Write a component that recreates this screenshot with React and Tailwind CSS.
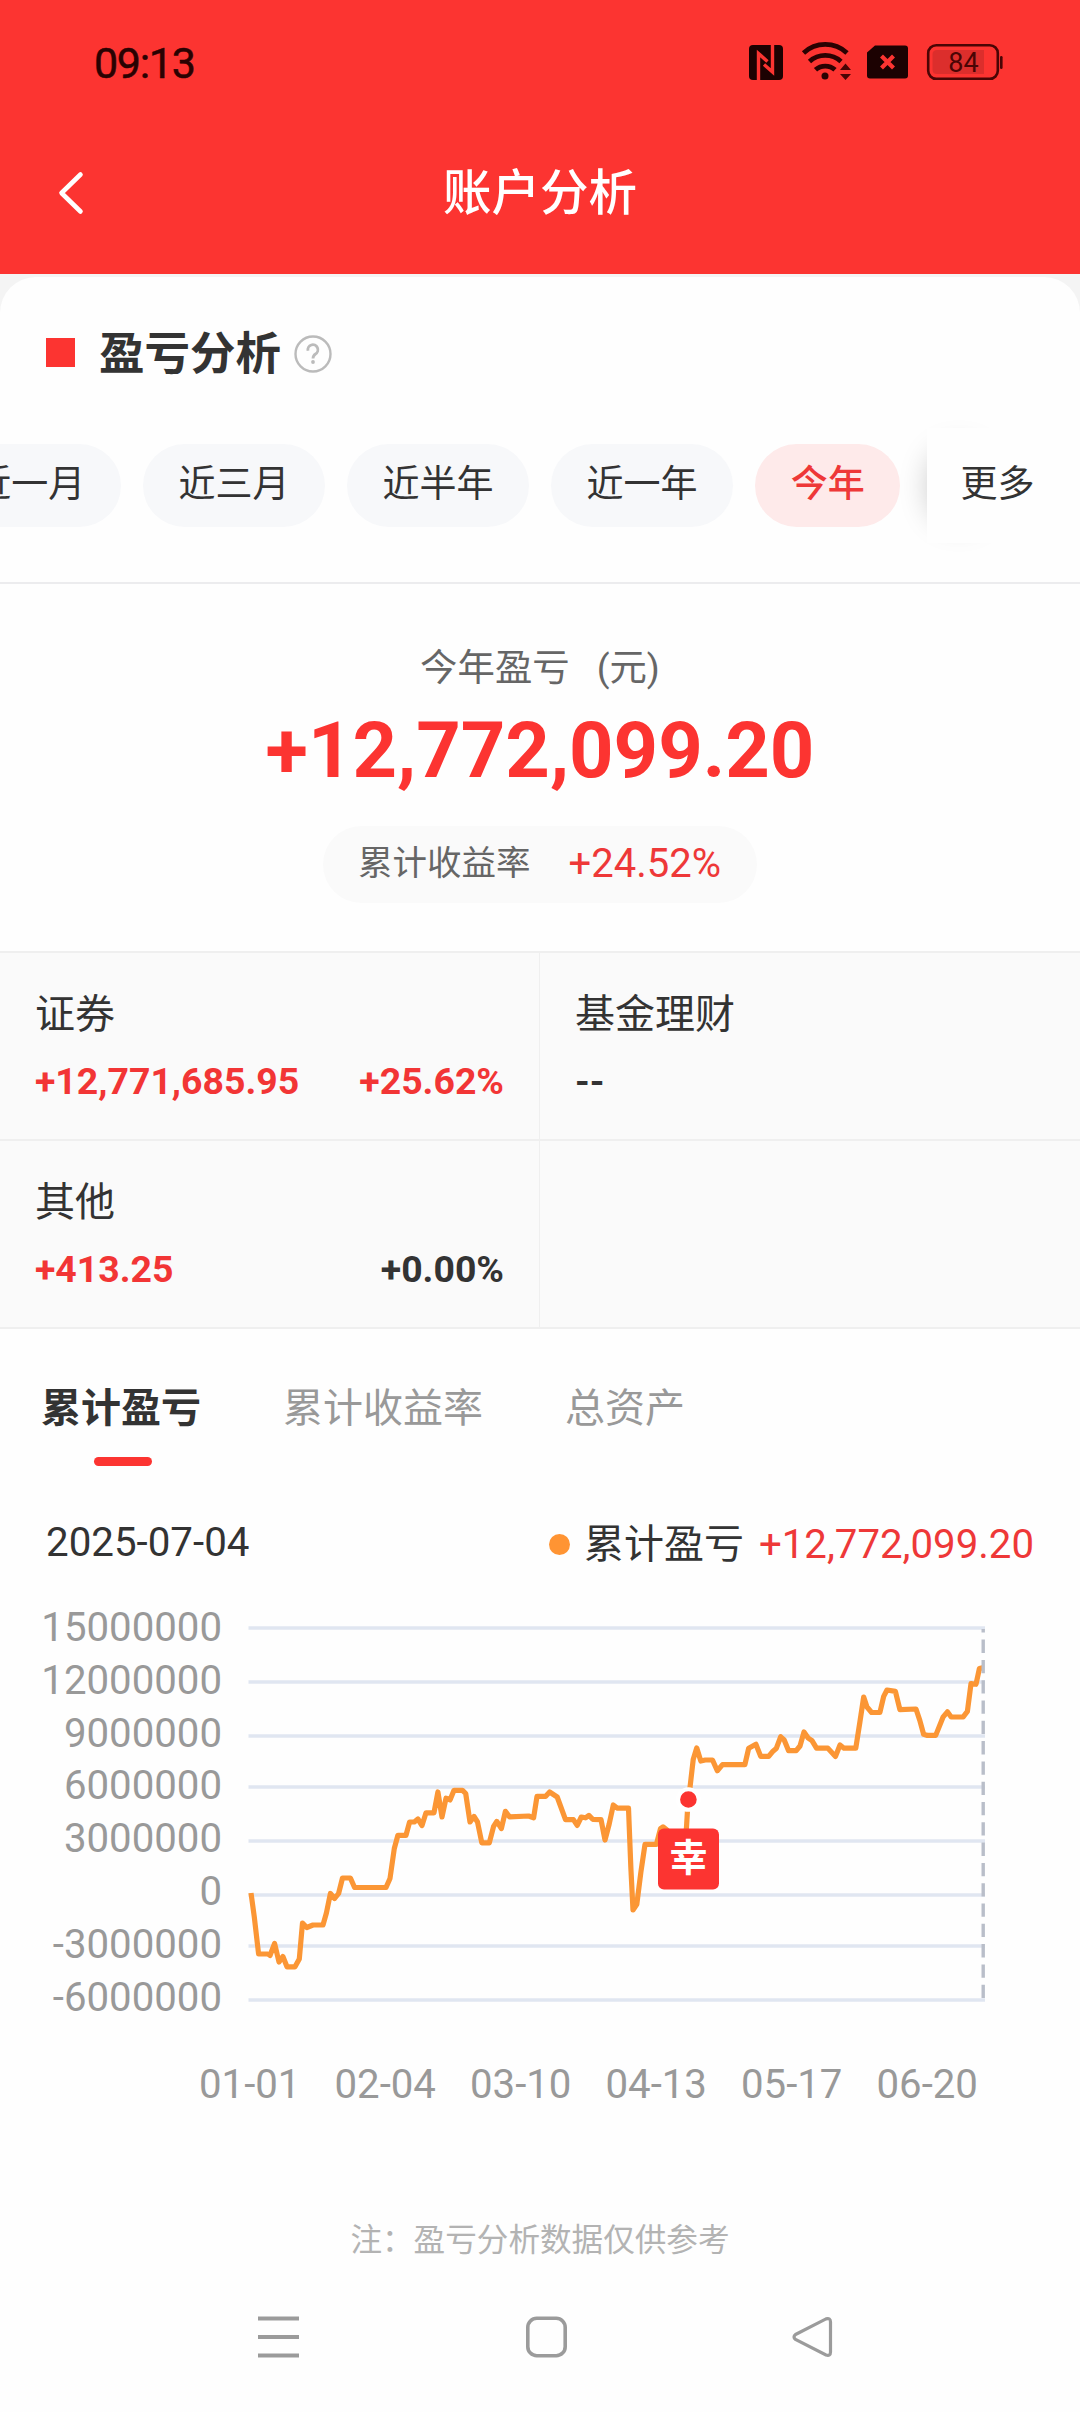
import { useState } from 'react';

const ranges = ['近一月', '近三月', '近半年', '近一年', '今年'];

const assets = [
  { name: '证券', amount: '+12,771,685.95', rate: '+25.62%', amountColor: 'text-[#f23535]', rateColor: 'text-[#f23535]' },
  { name: '基金理财', amount: '--', rate: '', amountColor: 'text-[#333]', rateColor: 'text-[#333]' },
  { name: '其他', amount: '+413.25', rate: '+0.00%', amountColor: 'text-[#f23535]', rateColor: 'text-[#333]' },
  { name: '', amount: '', rate: '', amountColor: '', rateColor: '' },
];

const tabs = ['累计盈亏', '累计收益率', '总资产'];

const yLabels = ['15000000', '12000000', '9000000', '6000000', '3000000', '0', '-3000000', '-6000000'];
const xLabels = ['01-01', '02-04', '03-10', '04-13', '05-17', '06-20'];
const gridLines = [1628, 1682, 1736, 1787, 1841, 1895, 1946, 2000];

const profitLine =
  '251,1893 254.3,1917 258.6,1954 267.9,1954 270,1955.5 274.6,1943.5 279,1962 282.9,1956.5 287,1966.8 295,1966.8 ' +
  '299.3,1959 302.5,1923 306.8,1927.5 313,1925 323,1925 326.4,1913 330.4,1893.5 334.6,1898.5 338.6,1893.5 342.5,1878 ' +
  '350.4,1878 354.6,1887.5 386,1887.5 390,1878.5 394.3,1848.5 397.9,1835.3 406,1835.3 409.6,1822 414.3,1822 417.9,1819 ' +
  '422,1825.5 426,1812.8 434,1812.8 437.9,1792 442,1817 446,1798.2 450,1800 454,1790.3 462.5,1790.3 465.7,1793.5 ' +
  '470,1822 474,1816.4 477.5,1822 481.8,1842.8 489.3,1842.8 493.6,1826.4 496.8,1821.4 501.4,1828.5 505.4,1811.4 ' +
  '509.6,1816.8 528.6,1816 533.6,1817.8 537,1796.4 545.5,1796.4 549.6,1792 557.2,1797 565.5,1819.6 573.4,1819.6 ' +
  '577.2,1825.4 581.3,1817 585.5,1817.8 588.9,1815.4 592.7,1819.3 601,1819.6 605,1840 609.2,1824 613.3,1805 ' +
  '617.5,1808.2 628.5,1808.2 630.9,1868.6 633,1910 636.8,1904.3 640.9,1872 645,1844.3 656.4,1844.3 660.5,1828.6 ' +
  '663,1826.8 667,1830 671,1844 683,1844 686.4,1828.6 687.4,1812 690,1787.5 693.2,1759.6 696.7,1747.9 700.8,1761 ' +
  '705.3,1760 712.5,1760 717.3,1770.7 722.5,1764.6 744.9,1764.6 748.7,1748.2 755.9,1744.3 760.7,1756.4 768.7,1756.4 ' +
  '772.4,1751.8 776.2,1748.6 780.7,1736.8 784.2,1740 788.6,1750.7 796.2,1750.7 800,1746 804,1732 808.3,1738.2 ' +
  '812,1740.7 816.5,1748.2 827.9,1748.2 835.5,1756.4 840,1745 844,1748.2 855.8,1748.2 859.9,1722 863.7,1697 867,1707 ' +
  '871.6,1712.5 879.9,1712.5 883.7,1696.4 887,1690 895.4,1691.4 899.9,1709.6 916,1709 919.8,1720.4 923.6,1734.3 ' +
  '927.4,1735.4 935.7,1735.4 943.2,1716.8 947.4,1711.8 951.2,1717 963.2,1716.8 967.4,1711.4 971,1683.6 976,1684.3 ' +
  '979.4,1668.6 982.5,1667.9';

const StatusBar = () => (
  <div className="flex h-[124px] items-center justify-between pr-[76px] pl-[94px]">
    <span className="pt-[2px] text-[43px] leading-none tracking-[-1.3px] text-[#2a0202] [-webkit-text-stroke:0.5px_#2a0202]">09:13</span>
    <svg className="h-[44px] w-[256px]" viewBox="748 40 256 44">
      {/* nfc */}
      <rect x="749" y="45" width="34" height="35" rx="4" fill="#1c0202" />
      <path d="M758.5 80 V53.5 L767.500 61.5 M772.5 45 V72 L764 64.500" fill="none" stroke="#fc3431" strokeWidth="3.400" />
      {/* wifi */}
      <g fill="none" stroke="#2a0202" strokeWidth="4.800">
        <path d="M803.500 53 A32 32 0 0 1 847 53" />
        <path d="M809.500 61.500 A23.500 23.500 0 0 1 841 61.500" />
        <path d="M815.500 69.800 A14.500 14.500 0 0 1 835 69.800" />
      </g>
      <circle cx="825" cy="76" r="3.500" fill="#2a0202" />
      <path d="M840 70 L845.500 63.500 L851 70 Z M840 74 L845.500 80 L851 74 Z" fill="#4a0505" />
      {/* sim without service */}
      <path d="M875 45.500 H905 Q908 45.500 908 48.500 V75.500 Q908 78.500 905 78.500 H870 Q867 78.500 867 75.500 V52.500 Z" fill="#1c0202" />
      <path d="M881.500 56 L893.500 68 M893.500 56 L881.500 68" stroke="#fc3431" strokeWidth="4.200" />
      {/* battery */}
      <rect x="928.200" y="45.200" width="69.600" height="33.600" rx="8" fill="none" stroke="#4a0505" strokeWidth="2.600" />
      <path d="M937 50 H984 V74 H937 Q932.500 74 932.500 69.500 V54.500 Q932.500 50 937 50 Z" fill="#dc2e2c" />
      <rect x="1000" y="56" width="2.600" height="13" rx="1.300" fill="#4a0505" />
      <text x="963.500" y="72" fontSize="27" textAnchor="middle" fill="#4a0505">84</text>
    </svg>
  </div>
);

const Header = () => (
  <header className="h-[274px] bg-[#fc3431]">
    <StatusBar />
    <div className="flex h-[137px] items-center pl-[58px]">
      <svg className="h-[44px] w-[26px]" viewBox="0 0 26 44" fill="none">
        <path d="M22.500 3.500 L3.500 22 L22.500 40.500" stroke="#fff" strokeWidth="4.600" strokeLinecap="round" strokeLinejoin="round" />
      </svg>
      <h1 className="flex-1 pt-[4px] pr-[84px] text-center text-[48.5px] leading-none font-medium text-white">账户分析</h1>
    </div>
  </header>
);

const RangePicker = ({ active, onChange }) => (
  <div className="relative mt-[50px] flex h-[115px] items-center overflow-x-clip">
    <div className="-ml-[61px] flex gap-[22.500px]">
      {ranges.map((r) => (
        <button
          key={r}
          onClick={() => onChange(r)}
          className={
            r === active
              ? 'h-[83px] shrink-0 rounded-full bg-[#feeaea] px-[35.300px] pb-[2px] text-[37px] leading-none font-medium text-[#ee3838]'
              : 'h-[83px] shrink-0 rounded-full bg-[#f7f8fa] px-[35.300px] pb-[2px] text-[37px] leading-none text-[#333]'
          }
        >
          {r}
        </button>
      ))}
    </div>
    <div className="absolute top-0 right-0 h-[115px] w-[153px]">
      <div className="absolute top-[20px] left-[2px] h-[76px] w-[60px] rounded-full shadow-[0_0_30px_rgba(0,0,0,0.22)]" />
      <button className="relative h-full w-full bg-[#fefefe] pb-[2px] pl-[33.500px] text-left text-[37px] leading-none text-[#333]">更多</button>
    </div>
  </div>
);

const Summary = () => (
  <div className="flex h-[367px] flex-col items-center pt-[64px]">
    <div className="flex gap-[27px] text-[37.400px] leading-[40px] text-[#666]">
      <span>今年盈亏</span>
      <span>(元)</span>
    </div>
    <div className="mt-[24px] text-[77.700px] leading-[78px] font-bold text-[#fc3431]">+12,772,099.20</div>
    <div className="mt-[36px] flex h-[77px] w-[434px] items-center justify-between rounded-full bg-[#fafafa] pr-[36px] pb-px pl-[35px]">
      <span className="pb-[2px] text-[34.5px] leading-none text-[#666]">累计收益率</span>
      <span className="text-[40px] leading-none text-[#ee3838]">+24.52%</span>
    </div>
  </div>
);

const AssetGrid = () => (
  <div className="grid grid-cols-2 border-t-2 border-[#efefef] bg-[#fafafa]">
    {assets.map((item, i) => (
      <div
        key={i}
        className="flex h-[188px] flex-col border-b-2 border-[#efefef] pt-[41px] pr-[35px] pl-[35px] odd:border-r"
      >
        <span className="h-[42px] text-[40px] leading-[42px] text-[#333]">{item.name}</span>
        <div className="mt-[25px] flex justify-between text-[37.400px] leading-[40px] font-bold">
          <span className={item.amountColor}>{item.amount}</span>
          <span className={item.rateColor}>{item.rate}</span>
        </div>
      </div>
    ))}
  </div>
);

const Chart = () => (
  <div className="text-[40.200px] text-[#999]">
    <div className="flex">
      <div className="flex w-[222px] flex-col pt-[2px] text-right">
        {yLabels.map((label) => (
          <span key={label} className="h-[52.8px] leading-[52.8px]">{label}</span>
        ))}
      </div>
      <svg className="ml-[18px] h-[430px] w-[760px]" viewBox="240 1600 760 430">
        {gridLines.map((y) => (
          <line key={y} x1="248.5" x2="985" y1={y} y2={y} stroke="#e0e6f1" strokeWidth="3.4" />
        ))}
        <polyline points={profitLine} fill="none" stroke="#fb9635" strokeWidth="5.2" strokeLinejoin="round" />
        <line x1="983.2" x2="983.2" y1="1998" y2="1629" stroke="#b9bec9" strokeWidth="3.4" strokeDasharray="13.3 7" />
        <circle cx="688.4" cy="1799.5" r="10.3" fill="#fc3431" stroke="#fff" strokeWidth="4" />
        <rect x="658" y="1828.6" width="61" height="61" rx="6" fill="#fc3431" />
        <text x="688.4" y="1871" fontSize="38" fontWeight="700" textAnchor="middle" fill="#fff">幸</text>
      </svg>
    </div>
    <div className="mt-[31px] flex justify-between pr-[102px] pl-[199px] leading-[48px]">
      {xLabels.map((label) => (
        <span key={label}>{label}</span>
      ))}
    </div>
  </div>
);

const NavBar = () => (
  <nav className="flex h-[50px] items-center pl-[256px]">
    <svg className="h-[46px] w-[46px]" viewBox="0 0 46 46" stroke="#9b9b9b" strokeWidth="3.8">
      <path d="M2 4.500 H43 M2 23 H43 M2 41.500 H43" />
    </svg>
    <svg className="ml-[222px] h-[46px] w-[46px]" viewBox="0 0 46 46" fill="none" stroke="#9b9b9b" strokeWidth="3.6">
      <rect x="3.800" y="4.300" width="37.400" height="37.400" rx="9" />
    </svg>
    <svg className="ml-[220px] h-[46px] w-[46px]" viewBox="0 0 46 46" fill="none" stroke="#9b9b9b" strokeWidth="3.2">
      <path d="M5.500 20.500 L36 4.900 Q40.500 3.500 40.500 8 V38 Q40.500 42.500 36 41 L5.500 25.500 Q2.500 23 5.500 20.500 Z" />
    </svg>
  </nav>
);

const App = () => {
  const [range, setRange] = useState('今年');
  const [tab, setTab] = useState('累计盈亏');

  return (
    <div className="h-[2412px] w-[1080px] overflow-hidden bg-[#f4f4f4] font-[Roboto,'Noto_Sans_CJK_SC',sans-serif]">
      <Header />
      <main className="mt-[3px] h-[2135px] rounded-t-[36px] bg-[#fefefe]">
        <div className="flex items-center pt-[53px] pl-[46px]">
          <span className="mb-[3px] h-[29px] w-[29px] bg-[#fc3431]" />
          <h2 className="relative top-px ml-[24px] text-[45.5px] leading-[48px] font-bold text-[#333]">盈亏分析</h2>
          <svg className="ml-[13px] h-[38px] w-[38px]" viewBox="0 0 38 38" fill="none" stroke="#bbb">
            <circle cx="19" cy="19" r="17.500" strokeWidth="2.400" />
            <path d="M14 15.800 A5 5 0 1 1 21.500 19 Q19 20.500 19 23.500" strokeWidth="2.800" />
            <circle cx="19" cy="27" r="1.900" fill="#bbb" stroke="none" />
          </svg>
        </div>

        <RangePicker active={range} onChange={setRange} />
        <div className="mt-[39px] h-[2px] bg-[#ececee]" />

        <Summary />
        <AssetGrid />

        <div className="flex items-start gap-[82px] pt-[59px] pl-[41px] text-[40px] leading-[42px]">
          {tabs.map((t) => (
            <button
              key={t}
              onClick={() => setTab(t)}
              className={t === tab ? 'font-bold text-[#333]' : 'text-[#999]'}
            >
              {t}
              <span className={t === tab ? 'mx-auto mt-[27px] block h-[9px] w-[58px] translate-x-[2px] rounded-full bg-[#fc3431]' : 'hidden'} />
            </button>
          ))}
        </div>

        <div className="mt-[53px] flex items-center justify-between pr-[46px] pl-[46px] text-[40px] leading-[48px] text-[#333]">
          <span className="pb-[3px] text-[40.300px]">2025-07-04</span>
          <div className="flex items-center">
            <span className="h-[21px] w-[21px] rounded-full bg-[#ff9433]" />
            <span className="ml-[14px]">累计盈亏</span>
            <span className="ml-[15px] text-[40.200px] text-[#ee3838]">+12,772,099.20</span>
          </div>
        </div>

        <div className="mt-[30px]">
          <Chart />
        </div>

        <p className="mt-[108px] text-center text-[31.6px] leading-[48px] text-[#b3b3b3]">注：盈亏分析数据仅供参考</p>
        <div className="mt-[47px]">
          <NavBar />
        </div>
      </main>
    </div>
  );
};

export default App;
